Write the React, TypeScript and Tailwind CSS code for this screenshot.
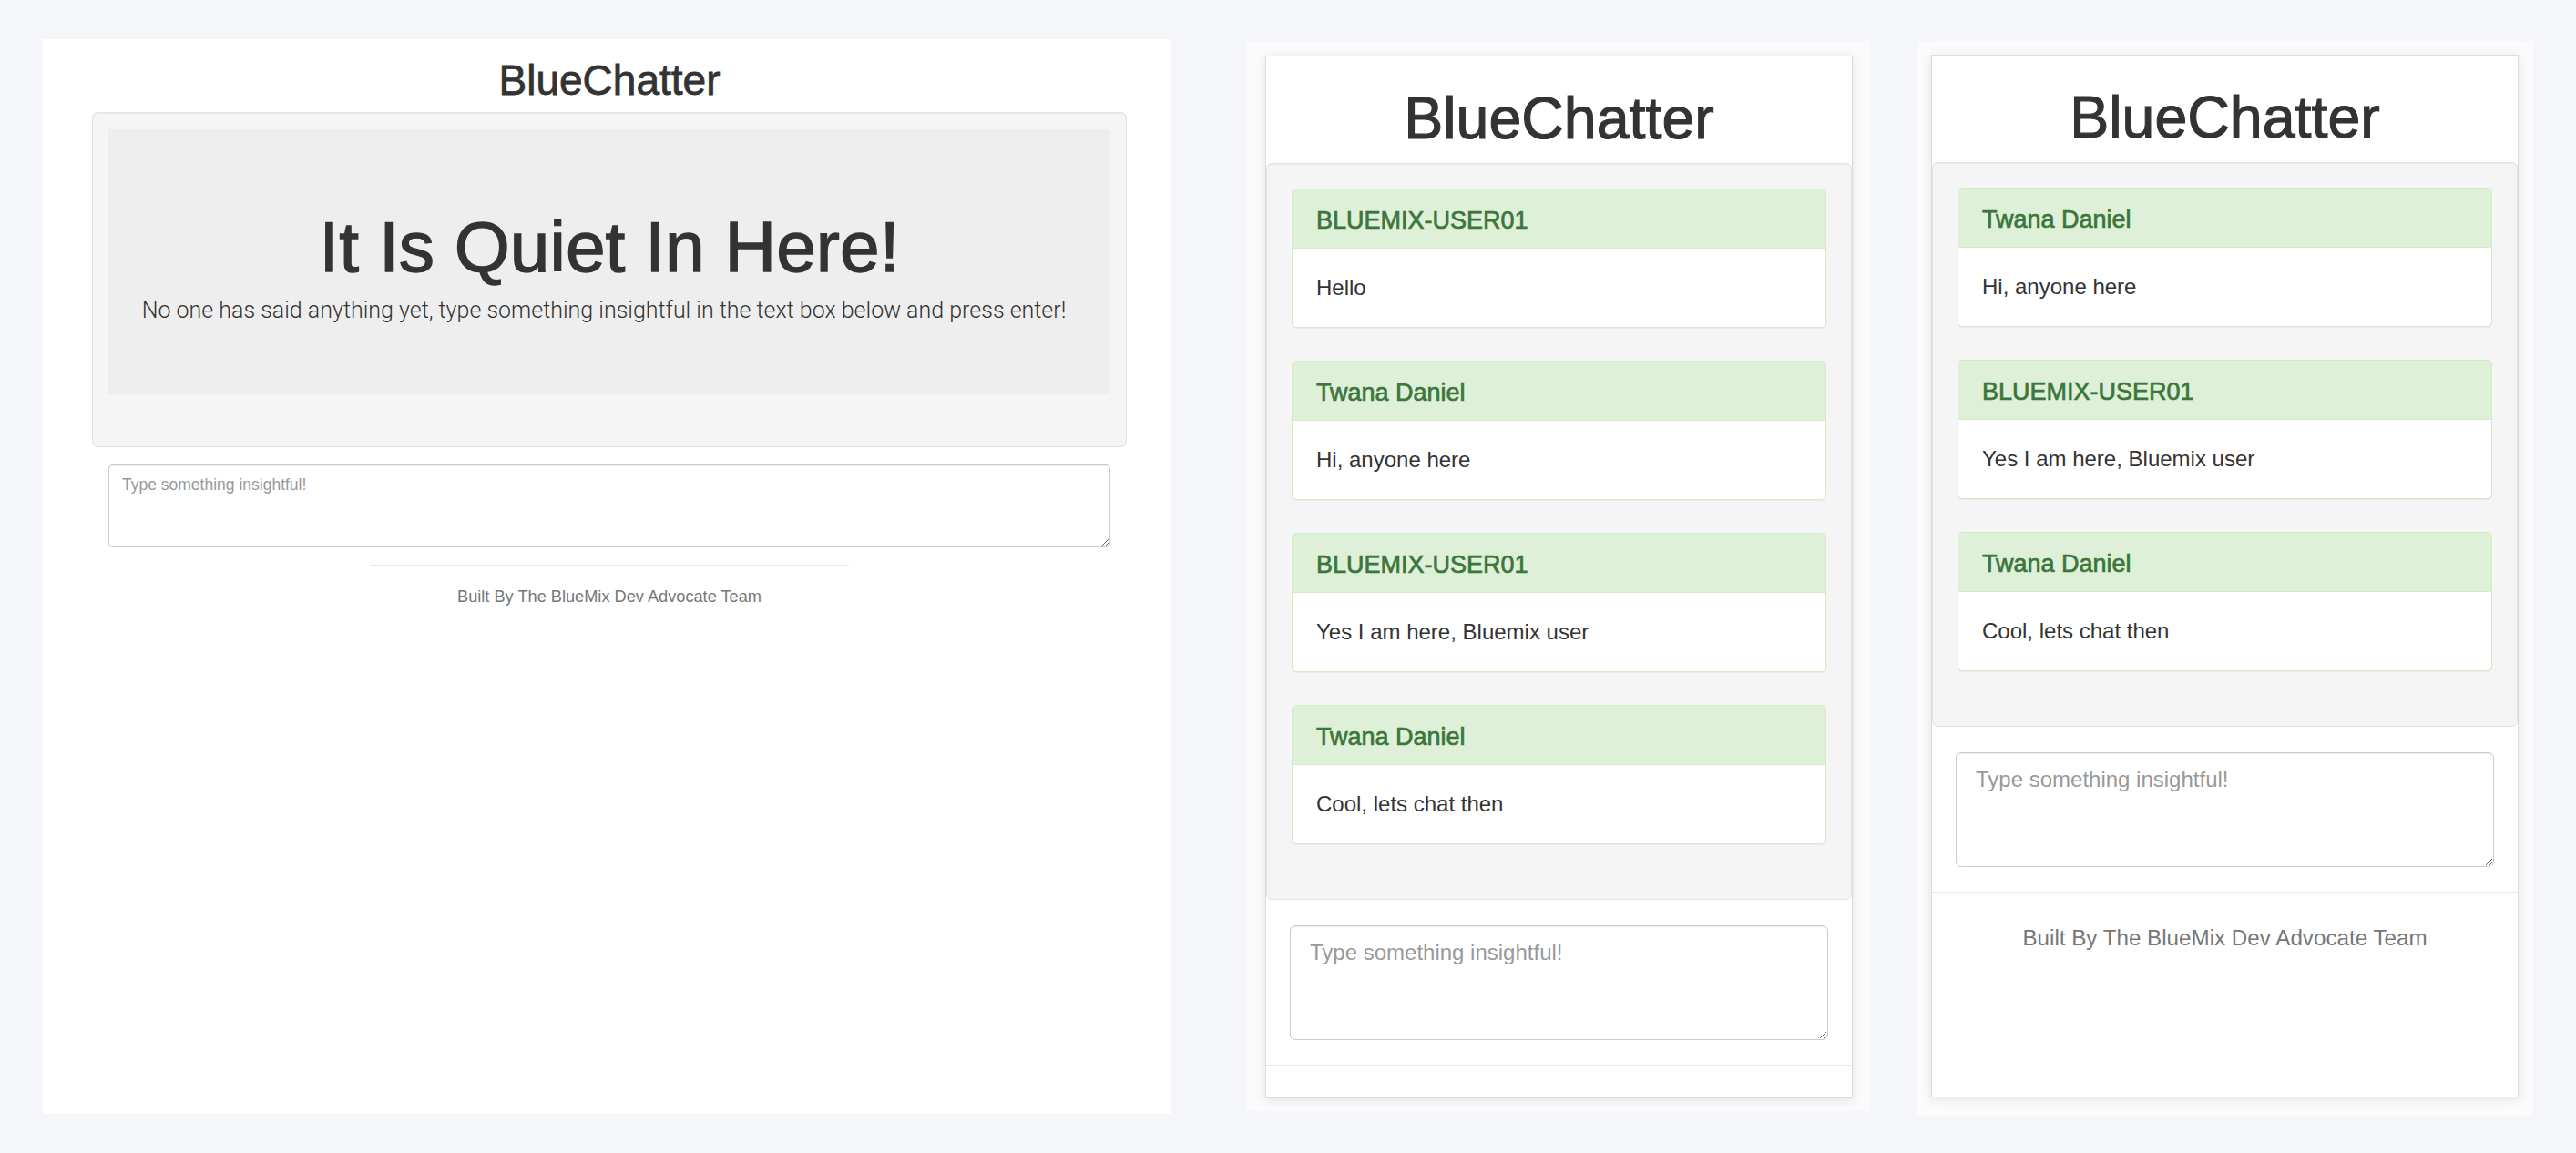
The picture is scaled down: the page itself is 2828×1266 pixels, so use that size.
import React from "react";

type Msg = { name: string; text: string };

const middleMsgs: Msg[] = [
  { name: "BLUEMIX-USER01", text: "Hello" },
  { name: "Twana Daniel", text: "Hi, anyone here" },
  { name: "BLUEMIX-USER01", text: "Yes I am here, Bluemix user" },
  { name: "Twana Daniel", text: "Cool, lets chat then" },
];

const rightMsgs: Msg[] = [
  { name: "Twana Daniel", text: "Hi, anyone here" },
  { name: "BLUEMIX-USER01", text: "Yes I am here, Bluemix user" },
  { name: "Twana Daniel", text: "Cool, lets chat then" },
];

function MessageCard({ m }: { m: Msg }) {
  return (
    <div className="rounded-[5px] border border-[#d6e9c6] bg-white shadow-[0_1px_1px_rgba(0,0,0,0.05)] overflow-hidden">
      <div className="h-[65px] bg-[#dff0d8] border-b border-[#d6e9c6] flex items-center px-[26px] pt-[3px] text-[27px] leading-[30px] text-[#3c763d] [-webkit-text-stroke:0.7px_#3c763d]">
        {m.name}
      </div>
      <div className="h-[86px] flex items-center px-[26px] text-[24px] leading-[32px] text-[#333333]">
        {m.text}
      </div>
    </div>
  );
}

function MobileCard({ msgs, footer }: { msgs: Msg[]; footer: boolean }) {
  return (
    <div className="w-[645px] h-[1145px] bg-white border border-[#dddddd] overflow-hidden flex flex-col shadow-[0_2px_12px_rgba(0,0,0,0.10)]">
      <h1 className="text-center text-[64.5px] leading-[70px] text-[#333333] pt-[33px] [-webkit-text-stroke:1.1px_#333333]">
        BlueChatter
      </h1>
      <div className="mt-[14px] border border-[#e3e3e3] rounded-[6px] bg-[#f5f5f5] pt-[27px] px-[27px] pb-[60px] flex flex-col gap-[36px] shadow-[inset_0_1px_1px_rgba(0,0,0,0.05)]">
        {msgs.map((m, i) => (
          <MessageCard key={i} m={m} />
        ))}
      </div>
      <div className="px-[26px] mt-[28px]">
        <textarea
          placeholder="Type something insightful!"
          className="block w-full h-[126px] border border-[#cccccc] rounded-[6px] bg-white shadow-[inset_0_1px_1px_rgba(0,0,0,0.075)] pl-[21px] pt-[12px] pr-[12px] text-[24px] leading-[34px] text-[#555555] placeholder:text-[#999999] outline-none"
        />
      </div>
      <div className="mt-[27px] border-t-2 border-[#e8e8e8]" />
      {footer && (
        <div className="mt-[32px] text-center text-[24.2px] leading-[33px] text-[#777777]">
          Built By The BlueMix Dev Advocate Team
        </div>
      )}
    </div>
  );
}

export default function App() {
  return (
    <div className="min-h-screen w-full bg-[#f5f6fa] flex items-start pl-[47px] pt-[43px] font-['Liberation_Sans',Arial,sans-serif]">
      {/* Desktop view */}
      <div className="w-[1239px] h-[1180px] shrink-0 bg-white pl-[54px] pr-[49px] pt-[20px] flex flex-col">
        <h1 className="text-center text-[46px] leading-[50px] text-[#333333] [-webkit-text-stroke:0.8px_#333333]">
          BlueChatter
        </h1>
        <div className="mt-[10px] border border-[#e3e3e3] rounded-[6px] bg-[#f5f5f5] pt-[18px] pb-[57px] px-[17px] shadow-[inset_0_1px_1px_rgba(0,0,0,0.05)]">
          <div className="h-[291px] bg-[#eeeeee] pt-[87px] text-center text-[#333333]">
            <div className="text-[78.5px] leading-[85px] [-webkit-text-stroke:1.3px_#333333]">It Is Quiet In Here!</div>
            <p className="mt-[10px] pr-[12px] text-[25px] leading-[34px] font-light font-['Roboto',sans-serif]">
              No one has said anything yet, type something insightful in the text box below and press enter!
            </p>
          </div>
        </div>
        <div className="px-[18px] mt-[19px]">
          <textarea
            placeholder="Type something insightful!"
            className="block w-full h-[91px] border border-[#cccccc] rounded-[4px] bg-white shadow-[inset_0_1px_1px_rgba(0,0,0,0.075)] pl-[14px] pt-[9px] pr-[10px] text-[17.5px] leading-[24px] text-[#555555] placeholder:text-[#999999] outline-none"
          />
        </div>
        <div className="mt-[19px] mx-auto w-[526px] border-t-2 border-[#e8e8e8]" />
        <div className="mt-[21px] text-center text-[18.2px] leading-[24px] text-[#777777]">
          Built By The BlueMix Dev Advocate Team
        </div>
      </div>

      {/* Mobile view 1 */}
      <div className="ml-[83px] mt-[2px] shrink-0 bg-[#fbfbfb] pt-[16px] pl-[20px] pr-[19px] pb-[14px]">
        <MobileCard msgs={middleMsgs} footer={false} />
      </div>

      {/* Mobile view 2 */}
      <div className="ml-[52px] mt-[2px] shrink-0 bg-[#fbfbfb] pt-[15px] pl-[15px] pr-[16px] pb-[20px]">
        <MobileCard msgs={rightMsgs} footer={true} />
      </div>
    </div>
  );
}
